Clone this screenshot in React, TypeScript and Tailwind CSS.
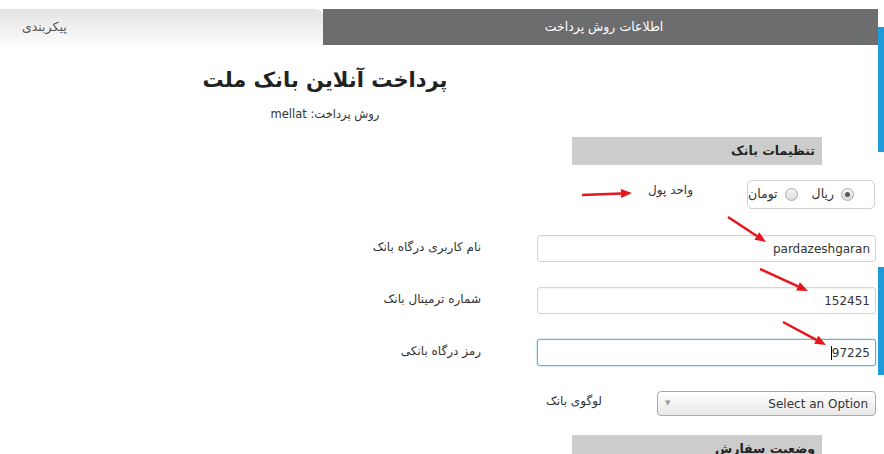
import React from "react";

const font = "font-['DejaVu_Sans',sans-serif]";

function Radio({ checked }: { checked?: boolean }) {
  return (
    <span className="flex h-[13px] w-[13px] items-center justify-center rounded-full border border-[#a9a9a9] bg-gradient-to-b from-[#f4f4f4] to-[#dcdcdc]">
      {checked && <span className="h-[5px] w-[5px] rounded-full bg-[#5a5a5a]" />}
    </span>
  );
}

function TextRow({
  label,
  value,
  focused,
}: {
  label: string;
  value: string;
  focused?: boolean;
}) {
  return (
    <div className="flex items-start">
      <div dir="rtl" className="w-[481px] pt-[3px] text-right text-[12px] text-[#333]">
        {label}
      </div>
      <div
        className={
          focused
            ? "ml-[56px] flex h-[27px] w-[339px] items-center justify-end rounded-[3px] border border-[#7aa7d8] bg-white pr-[5px] text-[12px] text-[#333] shadow-[0_0_2px_rgba(30,140,190,0.6)]"
            : "ml-[56px] flex h-[27px] w-[339px] items-center justify-end rounded-[3px] border border-[#d4d4d4] bg-white pr-[5px] text-[12px] text-[#333] shadow-[inset_0_1px_2px_rgba(0,0,0,0.05)]"
        }
      >
        {focused && <span className="h-[14px] w-px bg-black" />}
        {value}
      </div>
    </div>
  );
}

function Arrow({ x1, y1, x2, y2 }: { x1: number; y1: number; x2: number; y2: number }) {
  const a = Math.atan2(y2 - y1, x2 - x1);
  const l = 11;
  const w = 4.5;
  const bx = x2 - l * Math.cos(a);
  const by = y2 - l * Math.sin(a);
  const px = -Math.sin(a) * w;
  const py = Math.cos(a) * w;
  return (
    <g>
      <line x1={x1} y1={y1} x2={bx} y2={by} stroke="#e8141c" strokeWidth={2.5} />
      <polygon
        points={`${x2},${y2} ${bx + px},${by + py} ${bx - px},${by - py}`}
        fill="#e8141c"
      />
    </g>
  );
}

export default function App() {
  return (
    <div className={`relative h-[454px] w-[884px] overflow-hidden bg-white ${font}`}>
      {/* Tabs */}
      <div className="mt-[9px] flex h-[36px] w-[878px]">
        <div className="flex w-[323px] items-center rounded-tr-[7px] bg-gradient-to-b from-[#e4e4e4] to-[#fbfbfb] pl-[22px]">
          <span dir="rtl" className="text-[12.5px] text-[#555]">پیکربندی</span>
        </div>
        <div className="flex flex-1 items-center justify-center bg-[#6c6d6f] pl-[7px]">
          <span dir="rtl" className="text-[12.5px] text-white">اطلاعات روش پرداخت</span>
        </div>
      </div>

      {/* Title */}
      <div dir="rtl" className="mt-[20px] h-[30px] w-[650px] text-center text-[21px] font-bold leading-[30px] text-[#222]">
        پرداخت آنلاین بانک ملت
      </div>
      <div dir="rtl" className="mt-[10px] h-[18px] w-[650px] text-center text-[11.5px] leading-[18px] text-[#333]">
        روش پرداخت: mellat
      </div>

      {/* Section: bank settings */}
      <div dir="rtl" className="ml-[572px] mt-[14px] flex h-[28px] w-[250px] items-center bg-[#cccccc] pr-[7px] text-[12.5px] font-bold text-[#222]">
        تنظیمات بانک
      </div>

      {/* Currency */}
      <div className="mt-[15px] flex items-start">
        <div dir="rtl" className="w-[693px] pt-[1px] text-right text-[12px] text-[#333]">
          واحد پول
        </div>
        <div dir="rtl" className="ml-[54px] flex h-[29px] w-[128px] items-center gap-[10px] rounded-[5px] border border-[#cfcfcf] bg-white pr-[20px] text-[12.5px] text-[#333]">
          <span className="flex items-center gap-[7px]">
            <Radio checked />
            ریال
          </span>
          <span className="flex items-center gap-[7px] pr-[4px]">
            <Radio />
            تومان
          </span>
        </div>
      </div>

      <div className="mt-[26px]">
        <TextRow label="نام کاربری درگاه بانک" value="pardazeshgaran" />
      </div>
      <div className="mt-[25px]">
        <TextRow label="شماره ترمینال بانک" value="152451" />
      </div>
      <div className="mt-[25px]">
        <TextRow label="رمز درگاه بانکی" value="97225" focused />
      </div>

      {/* Logo select */}
      <div className="mt-[25px] flex items-start">
        <div dir="rtl" className="w-[602px] pt-[1px] text-right text-[12px] text-[#333]">
          لوگوی بانک
        </div>
        <div className="ml-[55px] flex h-[25px] w-[219px] items-center justify-between rounded-[4px] border border-[#aaaaaa] bg-gradient-to-b from-white to-[#e8e8e8] pl-[7px] pr-[7px] text-[12px] text-[#333]">
          <span className="text-[7px] text-[#999]">▼</span>
          <span>Select an Option</span>
        </div>
      </div>

      {/* Section: order status */}
      <div dir="rtl" className="ml-[572px] mt-[19px] flex h-[28px] w-[250px] items-start bg-[#cccccc] pr-[7px] pt-[5px] text-[12.5px] font-bold text-[#222]">
        وضعیت سفارش
      </div>

      {/* Side strips */}
      <div className="absolute right-0 top-[27px] h-[125px] w-[6px] bg-[#1e9bd8]" />
      <div className="absolute right-0 top-[267px] h-[108px] w-[6px] bg-[#1e9bd8]" />

      {/* Annotation arrows */}
      <svg className="pointer-events-none absolute left-0 top-0" width={884} height={454}>
        <Arrow x1={582} y1={195} x2={632} y2={193} />
        <Arrow x1={728} y1={217} x2={766} y2={242} />
        <Arrow x1={760} y1={269} x2={808} y2={291} />
        <Arrow x1={783} y1={322} x2={826} y2={345} />
      </svg>
    </div>
  );
}
